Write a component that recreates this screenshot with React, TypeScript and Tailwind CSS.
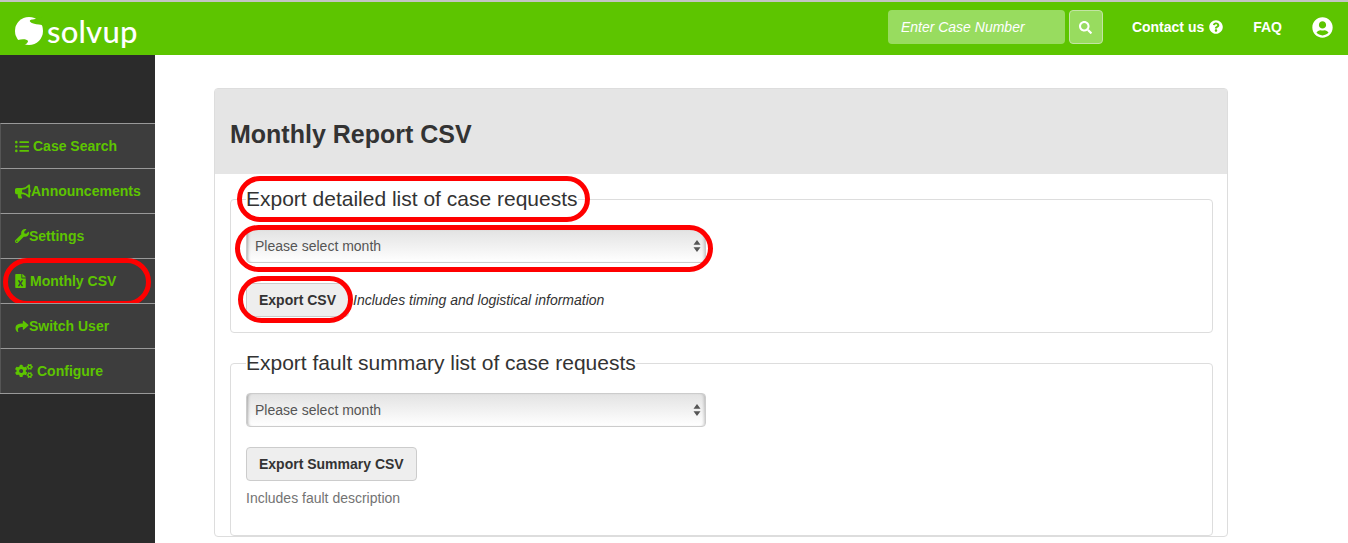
import type { ReactNode } from 'react';
import { FaBullhorn, FaCogs, FaFileExcel, FaListUl, FaQuestionCircle, FaSearch, FaShare, FaUserCircle, FaWrench } from 'react-icons/fa';

const menuItems: { label: string; icon: ReactNode; gap: string; ringed?: boolean }[] = [
  { label: 'Case Search', icon: <FaListUl className="h-[15px] w-[14px]" />, gap: 'gap-1' },
  { label: 'Announcements', icon: <FaBullhorn className="h-[15px] w-[16px]" />, gap: 'gap-0' },
  { label: 'Settings', icon: <FaWrench className="h-[14px] w-[14px]" />, gap: 'gap-0' },
  { label: 'Monthly CSV', icon: <FaFileExcel className="h-[14px] w-[11px]" />, gap: 'gap-[4px]', ringed: true },
  { label: 'Switch User', icon: <FaShare className="h-[13px] w-[14px]" />, gap: 'gap-0' },
  { label: 'Configure', icon: <FaCogs className="h-[14px] w-[18px]" />, gap: 'gap-[4px]' },
];

function Logo() {
  return (
    <div className="mt-[8px] flex items-center gap-[4px]">
      <svg viewBox="0 0 28 30" className="h-[30px] w-[28px]">
        <circle cx="14" cy="15" r="14" fill="#fff" />
        <path d="M23 2 C19 4 16 3 15 4.5 C14 6 17 8 27 9 L30 0 Z" fill="#5dc500" />
        <path d="M3 24 C7 23 12 23 13 25 C13 27 10 29 7 30 L0 30 Z" fill="#5dc500" />
      </svg>
      <span className="text-[31px] font-medium leading-none tracking-[0.2px] text-white [font-family:Lato,sans-serif]">solvup</span>
    </div>
  );
}

function MonthSelect({ ringed }: { ringed?: boolean }) {
  return (
    <div className="relative h-[34px] w-[460px]">
      <select className="h-full w-full appearance-none rounded border border-[#ccc] bg-gradient-to-b from-[#e3e3e3] to-white pl-2 text-sm text-[#555] shadow-[inset_3px_0_3px_-2px_rgba(0,0,0,0.3),inset_-3px_0_3px_-2px_rgba(0,0,0,0.2)]">
        <option>Please select month</option>
      </select>
      <svg viewBox="0 0 8 12" className="pointer-events-none absolute right-[5px] top-[11px] h-3 w-2 fill-[#555]">
        <path d="M4 0 7.5 4.8H.5ZM4 12 .5 7.2h7Z" />
      </svg>
      {ringed && <Ring className="left-[-11px] top-[-4px] h-[47px] w-[478px]" />}
    </div>
  );
}

function Ring({ className }: { className: string }) {
  return <span className={`pointer-events-none absolute rounded-[24px] border-[5px] border-[#f00] ${className}`} />;
}

function ExportButton({ children }: { children: ReactNode }) {
  return (
    <button className="h-[34px] rounded border border-[#ccc] bg-[#eee] px-3 text-sm font-bold text-[#333]">
      {children}
    </button>
  );
}

export default function App() {
  return (
    <div className="flex h-[543px] flex-col overflow-hidden bg-white text-[#333] [font-family:'Liberation_Sans',Arial,sans-serif]">
      <header className="flex h-[55px] shrink-0 items-center border-t-2 border-[#c4c4c4] bg-[#5dc500] pb-[3px] pl-[15px] pr-[15px] text-white">
        <Logo />
        <div className="ml-auto flex items-center">
          <input
            readOnly
            placeholder="Enter Case Number"
            className="h-[34px] w-[177px] rounded bg-[#98dc5f] px-[13px] text-sm italic text-white placeholder:text-white"
          />
          <button className="ml-[4px] flex h-[34px] w-[34px] items-center justify-center rounded border border-[#c3e4a4] bg-[#98dc5f]">
            <FaSearch className="h-[13px] w-[13px]" />
          </button>
          <span className="ml-[29px] flex items-center gap-[5px] text-sm font-bold">
            Contact us <FaQuestionCircle className="h-[14px] w-[14px]" />
          </span>
          <span className="ml-[30px] text-sm font-bold">FAQ</span>
          <FaUserCircle className="ml-[30px] h-[21px] w-[21px]" />
        </div>
      </header>

      <div className="flex min-h-0 flex-1">
        <aside className="w-[155px] shrink-0 bg-[#2b2b2b] pt-[68px]">
          <nav className="border-b border-[#999]">
            {menuItems.map((item) => (
              <div
                key={item.label}
                className={`relative flex h-[45px] items-center border-l border-t border-[#999] border-l-[#555] bg-[#3d3d3d] pl-[14px] text-sm font-bold text-[#5dc500] ${item.gap}`}
              >
                {item.icon}
                <span>{item.label}</span>
                {item.ringed && <Ring className="left-[2px] top-[-1px] h-[48px] w-[148px]" />}
              </div>
            ))}
          </nav>
        </aside>

        <main className="min-w-0 flex-1 pl-[59px] pr-[120px] pt-[33px]">
          <section className="rounded border border-[#ddd]">
            <div className="flex h-[85px] items-center bg-[#e5e5e5] px-[15px] pt-[6px]">
              <h1 className="text-[25px] font-bold">Monthly Report CSV</h1>
            </div>
            <div className="pl-[15px] pr-[14px] pt-[10px]">
              <fieldset className="relative h-[149px] rounded border border-[#ddd] px-[15px]">
                <legend className="text-[21px] leading-[30px]">
                  <span className="relative block px-0">
                    Export detailed list of case requests
                    <Ring className="left-[-9px] top-[-8px] h-[46px] w-[353px]" />
                  </span>
                </legend>
                <div className="mt-[15px]">
                  <MonthSelect ringed />
                </div>
                <div className="mt-[20px] flex items-center">
                  <div className="relative">
                    <ExportButton>Export CSV</ExportButton>
                    <Ring className="left-[-8px] top-[-7px] h-[47px] w-[115px]" />
                  </div>
                  <span className="ml-[4px] text-sm italic">Includes timing and logistical information</span>
                </div>
              </fieldset>

              <fieldset className="mt-[15px] h-[188px] rounded border border-[#ddd] px-[15px]">
                <legend className="text-[21px] leading-[30px]">Export fault summary list of case requests</legend>
                <div className="mt-[15px]">
                  <MonthSelect />
                </div>
                <div className="mt-[20px]">
                  <ExportButton>Export Summary CSV</ExportButton>
                </div>
                <p className="mt-[7px] text-sm text-[#737373]">Includes fault description</p>
              </fieldset>
            </div>
          </section>
        </main>
      </div>
    </div>
  );
}
